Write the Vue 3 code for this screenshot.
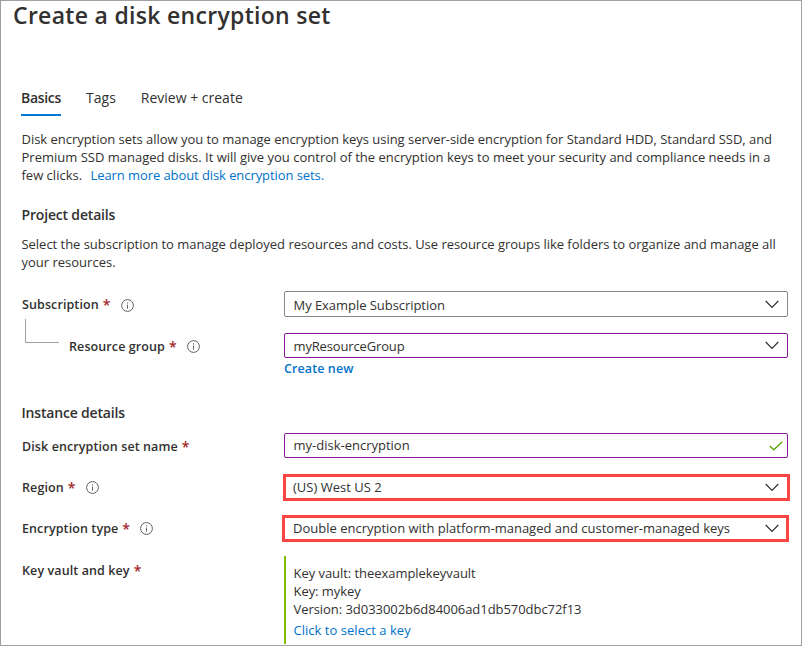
<script setup>
const tabs = [
  { name: 'Basics', active: true },
  { name: 'Tags', active: false },
  { name: 'Review + create', active: false },
]
const keyLines = [
  'Key vault: theexamplekeyvault',
  'Key: mykey',
  'Version: 3d033002b6d84006ad1db570dbc72f13',
]
</script>

<template>
  <main class="blade">
    <h1 class="title">Create a disk encryption set</h1>
    <nav class="tabs">
      <a v-for="tab in tabs" :key="tab.name" class="tab" :class="{ active: tab.active }">{{ tab.name }}</a>
    </nav>

    <p class="text intro">
      <span class="line tight">Disk encryption sets allow you to manage encryption keys using server-side encryption for Standard HDD, Standard SSD, and</span>
      <span class="line">Premium SSD managed disks. It will give you control of the encryption keys to meet your security and compliance needs in a</span>
      <span class="line">few clicks. <a class="link learn">Learn more about disk encryption sets.</a></span>
    </p>

    <h2 class="heading project">Project details</h2>
    <p class="text about">
      <span class="line tight">Select the subscription to manage deployed resources and costs. Use resource groups like folders to organize and manage all</span>
      <span class="line">your resources.</span>
    </p>

    <section class="form">
      <div class="row subscription">
        <div class="label">
          <span>Subscription</span><span class="star">*</span>
          <svg class="info" viewBox="0 0 13 13"><circle cx="6.5" cy="6.5" r="5.9" /><path d="M6.5 5.6v4M6.5 3.4v1.1" /></svg>
        </div>
        <div class="field">
          <span class="value">My Example Subscription</span>
          <svg class="chevron" viewBox="0 0 14 9"><path d="M.7 1 7 7.4 13.3 1" /></svg>
        </div>
      </div>

      <div class="row group">
        <div class="label nested">
          <i class="elbow"></i>
          <span>Resource group</span><span class="star">*</span>
          <svg class="info" viewBox="0 0 13 13"><circle cx="6.5" cy="6.5" r="5.9" /><path d="M6.5 5.6v4M6.5 3.4v1.1" /></svg>
        </div>
        <div class="field edited">
          <span class="value">myResourceGroup</span>
          <svg class="chevron" viewBox="0 0 14 9"><path d="M.7 1 7 7.4 13.3 1" /></svg>
        </div>
      </div>
      <a class="link create">Create new</a>

      <h2 class="heading instance">Instance details</h2>

      <div class="row name">
        <div class="label"><span>Disk encryption set name</span><span class="star">*</span></div>
        <div class="field edited">
          <span class="value">my-disk-encryption</span>
          <svg class="check" viewBox="0 0 14 10"><path d="M.8 5 4.8 8.8 13.2 .8" /></svg>
        </div>
      </div>

      <div class="row region">
        <div class="label">
          <span>Region</span><span class="star">*</span>
          <svg class="info" viewBox="0 0 13 13"><circle cx="6.5" cy="6.5" r="5.9" /><path d="M6.5 5.6v4M6.5 3.4v1.1" /></svg>
        </div>
        <div class="field marked">
          <span class="value">(US) West US 2</span>
          <svg class="chevron" viewBox="0 0 14 9"><path d="M.7 1 7 7.4 13.3 1" /></svg>
        </div>
      </div>

      <div class="row encryption">
        <div class="label">
          <span>Encryption type</span><span class="star">*</span>
          <svg class="info" viewBox="0 0 13 13"><circle cx="6.5" cy="6.5" r="5.9" /><path d="M6.5 5.6v4M6.5 3.4v1.1" /></svg>
        </div>
        <div class="field marked">
          <span class="value">Double encryption with platform-managed and customer-managed keys</span>
          <svg class="chevron" viewBox="0 0 14 9"><path d="M.7 1 7 7.4 13.3 1" /></svg>
        </div>
      </div>

      <div class="row key">
        <div class="label"><span>Key vault and key</span><span class="star">*</span></div>
        <div class="vault">
          <span v-for="line in keyLines" :key="line" class="line">{{ line }}</span>
          <a class="link select">Click to select a key</a>
        </div>
      </div>
    </section>
  </main>
</template>

<style>
body {
  background: #fff;
}
</style>

<style scoped>
.blade {
  box-sizing: border-box;
  width: 802px;
  height: 646px;
  border: 1px solid #a0a0a0;
  display: flex;
  flex-direction: column;
  font-family: "Open Sans", "Noto Sans", sans-serif;
  font-size: 13px;
  line-height: 18px;
  color: #323130;
  white-space: nowrap;
}
.title {
  margin: 0 0 0 12px;
  height: 30px;
  line-height: 28px;
  font-size: 23px;
  font-weight: 600;
  letter-spacing: 0.3px;
}
.tabs {
  display: flex;
  gap: 25px;
  margin: 55px 0 0 20px;
  height: 30px;
}
.tab {
  box-sizing: border-box;
  height: 30px;
  line-height: 24px;
  font-size: 14px;
  border-bottom: 2px solid transparent;
}
.tab.active {
  font-weight: 600;
  letter-spacing: -0.3px;
  border-color: #0078d4;
}
.text {
  margin: 0 0 0 20.5px;
}
.line {
  display: block;
}
.tight {
  letter-spacing: -0.03px;
}
.intro {
  margin-top: 14px;
}
.link {
  color: #0072c9;
}
.learn {
  margin-left: 5px;
  letter-spacing: -0.08px;
}
.heading {
  margin: 0 0 0 20.5px;
  height: 20px;
  line-height: 20px;
  font-size: 14px;
  font-weight: 600;
  letter-spacing: -0.18px;
}
.project {
  margin-top: 21px;
}
.about {
  margin-top: 10px;
}
.form {
  display: flex;
  flex-direction: column;
}
.row {
  display: flex;
  align-items: center;
  padding-left: 21px;
}
.label {
  width: 262px;
  flex: none;
  display: flex;
  align-items: center;
  font-size: 12.5px;
  font-weight: 600;
  letter-spacing: 0.1px;
  padding-top: 2px;
  box-sizing: border-box;
}
.star {
  color: #a4262c;
  font-size: 14px;
  margin-left: 4px;
}
.info {
  width: 13px;
  height: 13px;
  margin-left: 10px;
  fill: none;
  stroke: #605e5c;
  stroke-width: 1;
}
.elbow {
  box-sizing: border-box;
  width: 34px;
  height: 24px;
  margin: -32px 10px 0 3px;
  border: solid #a0a0a0;
  border-width: 0 0 1px 1px;
}
.field {
  box-sizing: border-box;
  width: 504px;
  height: 25px;
  border: 1px solid #8a8886;
  border-radius: 2px;
  padding: 0 8px 0 8.5px;
  display: flex;
  align-items: center;
  justify-content: space-between;
}
.edited {
  border-color: #881798;
}
.marked {
  width: 507px;
  height: 27px;
  border: 3px solid #fb4545;
  border-radius: 0;
  padding: 0 8px 0 7px;
}
.value {
  padding-bottom: 2px;
}
.chevron {
  width: 14px;
  height: 9px;
  fill: none;
  stroke: #323130;
  stroke-width: 1.2;
}
.check {
  width: 14px;
  height: 10px;
  margin-right: -4px;
  fill: none;
  stroke: #57a300;
  stroke-width: 1.2;
}
.subscription {
  margin-top: 20px;
}
.subscription .field {
  height: 26px;
}
.subscription .value,
.group .value {
  padding: 1px 0 0;
}
.subscription .value {
  letter-spacing: -0.05px;
}
.group .value {
  letter-spacing: -0.15px;
}
.group {
  margin-top: 16px;
  height: 25px;
}
.create {
  margin: 2px 0 0 283px;
  font-size: 12.5px;
  font-weight: 600;
  letter-spacing: 0.1px;
}
.instance {
  margin-top: 25px;
}
.name {
  margin-top: 10px;
}
.region {
  margin-top: 16px;
}
.region .label {
  width: 261px;
  padding-top: 0;
}
.encryption {
  margin-top: 14px;
}
.encryption .label {
  width: 260px;
  padding-top: 0;
}
.encryption .field {
  padding: 0 7px 0 8px;
}
.key {
  margin-top: 14px;
  align-items: flex-start;
}
.key .label {
  height: 28px;
}
.vault {
  box-sizing: border-box;
  height: 88px;
  border-left: 2px solid #7fba00;
  padding: 8px 0 0 7.5px;
  letter-spacing: -0.05px;
}
.select {
  display: block;
  margin-top: 3px;
  letter-spacing: 0.03px;
}
</style>
